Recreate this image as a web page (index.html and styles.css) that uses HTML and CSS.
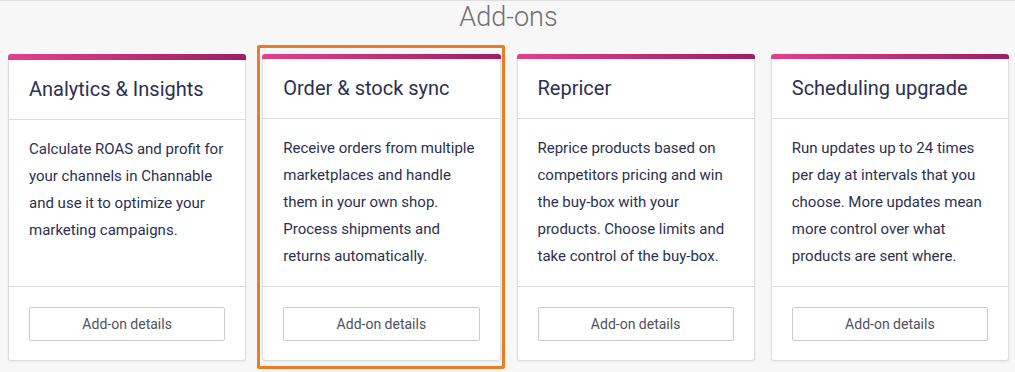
FILE: index.html
```html
<!DOCTYPE html>
<html lang="en">
<head>
  <meta charset="UTF-8">
  <meta name="viewport" content="width=device-width, initial-scale=1.0">
  <title>Add-ons</title>
  <link rel="stylesheet" href="styles.css">
</head>
<body>
  <div class="pagina">
    <h1 class="titulo">Add-ons</h1>

    <div class="addons">
      <div class="card">
        <div class="card-topo">Analytics &amp; Insights</div>
        <div class="card-corpo">Calculate ROAS and profit for your channels in Channable and use it to optimize your marketing campaigns.</div>
        <div class="card-rodape"><button class="btn-detalhes">Add-on details</button></div>
      </div>

      <div class="card destaque">
        <div class="card-topo">Order &amp; stock sync</div>
        <div class="card-corpo">Receive orders from multiple marketplaces and handle them in your own shop. Process shipments and returns automatically.</div>
        <div class="card-rodape"><button class="btn-detalhes">Add-on details</button></div>
        <div class="moldura"></div>
      </div>

      <div class="card">
        <div class="card-topo">Repricer</div>
        <div class="card-corpo">Reprice products based on competitors pricing and win the buy-box with your products. Choose limits and take control of the buy-box.</div>
        <div class="card-rodape"><button class="btn-detalhes">Add-on details</button></div>
      </div>

      <div class="card">
        <div class="card-topo">Scheduling upgrade</div>
        <div class="card-corpo">Run updates up to 24 times per day at intervals that you choose. More updates mean more control over what products are sent where.</div>
        <div class="card-rodape"><button class="btn-detalhes">Add-on details</button></div>
      </div>
    </div>
  </div>
</body>
</html>
```

FILE: styles.css
```css
:root {
  --fundo: #f7f7f7;
  --branco: #ffffff;
  --borda: #dcdcdc;
  --texto: #2c2f52;
  --cinza-titulo: #707070;
  --cinza-botao: #4e5160;
  --rosa: #e2418c;
  --roxo: #9b1f63;
  --laranja: #ec7b24;
}

* {
  box-sizing: border-box;
}

html,
body {
  min-height: 100%;
}

body {
  margin: 0;
  font-family: Roboto, 'Liberation Sans', Arial, sans-serif;
  background-color: var(--fundo);
  color: var(--texto);
}

.pagina {
  border-top: 1px solid #dedede;
  padding: 0 6px 11px 8px;
}

.titulo {
  margin: 0 0 21px;
  text-align: center;
  font-size: 27px;
  line-height: 32px;
  font-weight: 300;
  color: var(--cinza-titulo);
}

.addons {
  display: grid;
  grid-template-columns: repeat(4, 1fr);
  gap: 16px;
}

.card {
  position: relative;
  display: flex;
  flex-direction: column;
  height: 307px;
  background-color: var(--branco);
  border: 1px solid var(--borda);
  border-top: none;
  border-radius: 3px;
  box-shadow: 0 1px 2px rgba(0,0,0,0.06);
}

/* faixa colorida no topo */
.card::before {
  content: '';
  display: block;
  height: 6px;
  margin: 0 -1px;
  border-radius: 3px 3px 0 0;
  background: linear-gradient(to right, var(--rosa), var(--roxo));
}

/* moldura laranja do card selecionado */
.moldura {
  position: absolute;
  top: -9px;
  left: -6px;
  width: calc(100% + 11px);
  height: 324px;
  border: 3px solid var(--laranja);
  border-radius: 2px;
  pointer-events: none;
}

.card-topo {
  padding: 17px 20px 18px;
  font-size: 20px;
  line-height: 24px;
  border-bottom: 1px solid var(--borda);
}

.card-corpo {
  flex: 1;
  padding: 16px 20px;
  font-size: 15px;
  line-height: 27px;
  border-bottom: 1px solid var(--borda);
}

.card-rodape {
  padding: 20px 20px 19px;
}

.btn-detalhes {
  display: block;
  width: 100%;
  height: 34px;
  font-family: inherit;
  font-size: 14px;
  color: var(--cinza-botao);
  background-color: var(--branco);
  border: 1px solid #c9c9cf;
  border-radius: 2px;
  cursor: pointer;
}

.btn-detalhes:hover {
  background-color: #f2f2f2;
}
```
